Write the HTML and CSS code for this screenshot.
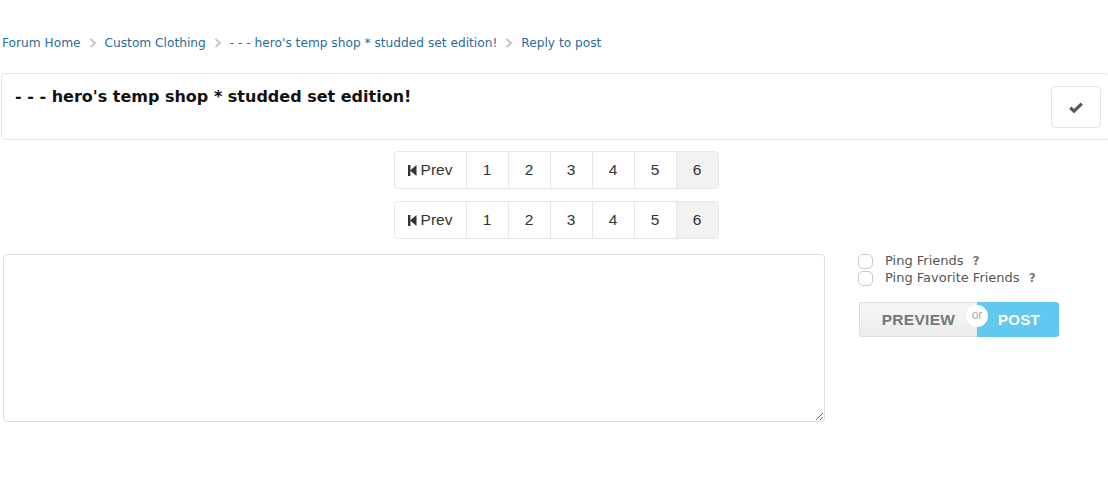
FILE: index.html
```html
<!DOCTYPE html>
<html>
<head>
<meta charset="utf-8">
<link rel="stylesheet" href="styles.css">
</head>
<body>
<div class="page">
  <nav class="crumbs">
    <a href="#">Forum Home</a><span class="sep"><svg width="8" height="10" viewBox="0 0 8 10"><path d="M1.5 1 L6 5 L1.5 9" fill="none" stroke="#c8c8c8" stroke-width="2"/></svg></span>
    <a href="#">Custom Clothing</a><span class="sep"><svg width="8" height="10" viewBox="0 0 8 10"><path d="M1.5 1 L6 5 L1.5 9" fill="none" stroke="#c8c8c8" stroke-width="2"/></svg></span>
    <a href="#">- - - hero's temp shop * studded set edition!</a><span class="sep"><svg width="8" height="10" viewBox="0 0 8 10"><path d="M1.5 1 L6 5 L1.5 9" fill="none" stroke="#c8c8c8" stroke-width="2"/></svg></span>
    <a href="#">Reply to post</a>
  </nav>

  <div class="titlebox">
    <h1 class="title">- - - hero's temp shop * studded set edition!</h1>
    <button class="checkbtn"><svg width="14" height="11" viewBox="0 0 14 11"><path d="M1.2 5.6 L5 9.2 L12.8 1.6" fill="none" stroke="#595959" stroke-width="3.2" stroke-linejoin="miter"/></svg></button>
  </div>

  <div class="pager-wrap">
    <div class="pager">
      <a class="cell prev" href="#"><svg width="9" height="11" viewBox="0 0 9 11"><rect x="0" y="0" width="2.4" height="11" fill="#333"/><path d="M8.5 0 L2 5.5 L8.5 11 Z" fill="#333"/></svg>Prev</a>
      <a class="cell" href="#">1</a><a class="cell" href="#">2</a><a class="cell" href="#">3</a><a class="cell" href="#">4</a><a class="cell" href="#">5</a><span class="cell active">6</span>
    </div>
    <div class="pager">
      <a class="cell prev" href="#"><svg width="9" height="11" viewBox="0 0 9 11"><rect x="0" y="0" width="2.4" height="11" fill="#333"/><path d="M8.5 0 L2 5.5 L8.5 11 Z" fill="#333"/></svg>Prev</a>
      <a class="cell" href="#">1</a><a class="cell" href="#">2</a><a class="cell" href="#">3</a><a class="cell" href="#">4</a><a class="cell" href="#">5</a><span class="cell active">6</span>
    </div>
  </div>

  <div class="reply">
    <textarea class="editor"></textarea>
    <div class="side">
      <label class="opt"><span class="box"></span><span class="lbl">Ping Friends</span><span class="q">?</span></label>
      <label class="opt"><span class="box"></span><span class="lbl">Ping Favorite Friends</span><span class="q">?</span></label>
      <div class="actions">
        <button class="btn preview">Preview</button>
        <span class="or">or</span>
        <button class="btn post">Post</button>
      </div>
    </div>
  </div>
</div>
</body>
</html>
```

FILE: styles.css
```css
* { box-sizing: border-box; }
html, body { margin: 0; padding: 0; background: #fff; }
body { font-family: "DejaVu Sans", Verdana, sans-serif; color: #333; }

.page { width: 1110px; padding: 34px 0 0 1px; }

.crumbs { display: flex; align-items: center; height: 17px; padding-left: 1px; font-size: 12.2px; }
.crumbs a { color: #2b6c99; text-decoration: none; }
.crumbs .sep { display: inline-flex; width: 24px; justify-content: center; align-items: center; }

.titlebox {
  margin-top: 22px;
  height: 67px;
  border: 1px solid #e3e3e3;
  border-radius: 5px;
  display: flex;
  justify-content: space-between;
  align-items: flex-start;
  padding: 12px 8px 0 13px;
}
.title { margin: 1px 0 0; font-size: 16px; font-weight: bold; color: #111; }
.checkbtn {
  width: 50px; height: 42px;
  border: 1px solid #e3e3e3; border-radius: 4px; background: #fff;
  display: flex; align-items: center; justify-content: center; padding: 0;
}

.pager-wrap { display: flex; flex-direction: column; align-items: center; gap: 12px; margin-top: 11px; }
.pager { display: flex; height: 38px; border: 1px solid #e6e6e6; border-radius: 4px; overflow: hidden; margin-left: 1px; }
.cell {
  width: 42px; display: flex; align-items: center; justify-content: center;
  font-family: "Liberation Sans", Arial, sans-serif; font-size: 15.5px; color: #333;
  text-decoration: none; border-left: 1px solid #e6e6e6;
}
.cell.prev { width: 71px; border-left: none; gap: 4px; }
.cell.active { background: #f2f2f2; }

.reply { display: flex; margin-top: 15px; padding-left: 2px; }
.editor {
  width: 822px; height: 168px; margin: 0;
  border: 1px solid #dcdcdc; border-radius: 4px; resize: both;
  font-family: "DejaVu Sans", sans-serif;
}
.side { margin-left: 33px; }
.opt { display: flex; align-items: flex-start; height: 17px; font-size: 13px; color: #555; }
.lbl { line-height: 14px; }
.box { width: 15px; height: 15px; border: 1px solid #c9c9c9; border-radius: 5px; margin-right: 12px; }
.q { font-weight: bold; color: #777; font-size: 12px; line-height: 14px; margin-left: 9px; }

.actions { position: relative; display: flex; margin-top: 14px; margin-left: 1px; }
.btn {
  height: 35px; border: none; padding: 0; margin: 0;
  font-family: "Liberation Sans", Arial, sans-serif; font-weight: bold; font-size: 15.5px;
  text-transform: uppercase; letter-spacing: 0.3px;
}
.preview {
  width: 118px; color: #777; background: linear-gradient(#f6f6f6, #ececec);
  border: 1px solid #ddd; border-right: none; border-radius: 3px 0 0 3px;
}
.post { width: 82px; color: #fff; background: #61c8f0; border-radius: 0 3px 3px 0; padding-left: 2px; font-size: 15px; }
.or {
  position: absolute; left: 107px; top: 3px;
  width: 22px; height: 22px; border-radius: 50%; background: #fff;
  display: flex; align-items: center; justify-content: center;
  font-family: "Liberation Sans", Arial, sans-serif; font-size: 12px; color: #aaa; line-height: 1;
  padding-bottom: 3px;
}
```
